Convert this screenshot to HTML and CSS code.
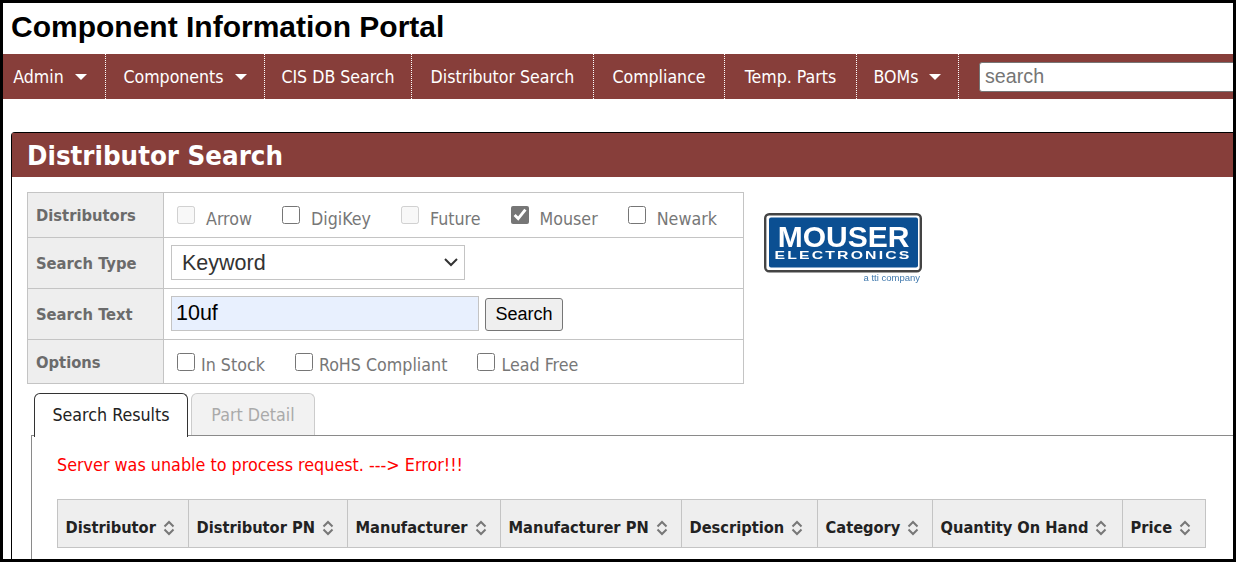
FILE: index.html
```html
<!DOCTYPE html>
<html lang="en">
<head>
<meta charset="utf-8">
<title>Component Information Portal</title>
<link rel="stylesheet" href="styles.css">
</head>
<body>
<svg class="defs" width="0" height="0" aria-hidden="true">
  <symbol id="sort" viewBox="0 0 12 16"><path d="M1.500 6.500 6 2l4.500 4.500M1.500 9.500 6 14l4.500-4.500" fill="none" stroke="#777" stroke-width="2"/></symbol>
</svg>
<div class="frame">
  <h1 class="title">Component Information Portal</h1>
  <nav class="nav">
    <a class="nav-item nav-admin">Admin<i class="caret"></i></a>
    <a class="nav-item nav-comp">Components<i class="caret"></i></a>
    <a class="nav-item nav-cis">CIS DB Search</a>
    <a class="nav-item nav-dist">Distributor Search</a>
    <a class="nav-item nav-comply">Compliance</a>
    <a class="nav-item nav-temp">Temp. Parts</a>
    <a class="nav-item nav-boms">BOMs<i class="caret"></i></a>
    <input class="nav-search" type="text" placeholder="search">
  </nav>
  <section class="panel">
    <h2 class="panel-head">Distributor Search</h2>
    <div class="panel-body">
      <div class="form-row">
        <table class="form">
          <tr class="r1">
            <th>Distributors</th>
            <td>
              <div class="checks dist">
                <label><input type="checkbox" disabled><span>Arrow</span></label>
                <label><input type="checkbox"><span>DigiKey</span></label>
                <label><input type="checkbox" disabled><span>Future</span></label>
                <label><input type="checkbox" checked><span>Mouser</span></label>
                <label><input type="checkbox"><span>Newark</span></label>
              </div>
            </td>
          </tr>
          <tr class="r2">
            <th>Search Type</th>
            <td class="field-cell"><select class="type"><option>Keyword</option></select></td>
          </tr>
          <tr class="r3">
            <th>Search Text</th>
            <td class="field-cell"><div class="search-line"><input class="text" type="text" value="10uf"><button class="btn" type="button">Search</button></div></td>
          </tr>
          <tr class="r4">
            <th>Options</th>
            <td>
              <div class="checks opts">
                <label><input type="checkbox"><span>In Stock</span></label>
                <label><input type="checkbox"><span>RoHS Compliant</span></label>
                <label><input type="checkbox"><span>Lead Free</span></label>
              </div>
            </td>
          </tr>
        </table>
        <svg class="logo" width="162" height="76" viewBox="0 0 162 76" role="img" aria-label="Mouser Electronics">
          <rect x="1.200" y="1.200" width="155.600" height="57" rx="4" fill="#fff" stroke="#444" stroke-width="2.400"/>
          <rect x="5" y="4.500" width="149" height="50" rx="2" fill="#0b4f92"/>
          <text x="79.500" y="33.500" text-anchor="middle" class="logo-main">MOUSER</text>
          <text x="79" y="46" text-anchor="middle" class="logo-sub" textLength="137" lengthAdjust="spacingAndGlyphs">ELECTRONICS</text>
          <text x="156" y="68" text-anchor="end" class="logo-tti">a tti company</text>
        </svg>
      </div>
      <div class="tabs">
        <span class="tab active">Search Results</span>
        <span class="tab off">Part Detail</span>
      </div>
      <div class="tab-body">
        <p class="error">Server was unable to process request. ---&gt; Error!!!</p>
        <table class="results">
          <tr>
            <th class="w1">Distributor<svg class="sort"><use href="#sort"/></svg></th>
            <th class="w2">Distributor PN<svg class="sort"><use href="#sort"/></svg></th>
            <th class="w3">Manufacturer<svg class="sort"><use href="#sort"/></svg></th>
            <th class="w4">Manufacturer PN<svg class="sort"><use href="#sort"/></svg></th>
            <th class="w5">Description<svg class="sort"><use href="#sort"/></svg></th>
            <th class="w6">Category<svg class="sort"><use href="#sort"/></svg></th>
            <th class="w7">Quantity On Hand<svg class="sort"><use href="#sort"/></svg></th>
            <th class="w8">Price<svg class="sort"><use href="#sort"/></svg></th>
          </tr>
        </table>
      </div>
    </div>
  </section>
</div>
</body>
</html>
```
FILE: styles.css
```css
* { box-sizing: border-box; }
html, body { margin: 0; padding: 0; background: #fff; }
.defs { position: absolute; }
.frame {
  width: 1236px;
  height: 562px;
  border: 3px solid #000;
  overflow: hidden;
  font-family: "DejaVu Sans Condensed", "DejaVu Sans", sans-serif;
  background: #fff;
}
.title {
  margin: 0;
  height: 51px;
  padding: 7px 0 0 8px;
  font: bold 30px/33px "Liberation Sans", Arial, sans-serif;
  color: #000;
}
.nav {
  display: flex;
  align-items: stretch;
  width: 1230px;
  height: 45px;
  background: #873e3a;
  color: #fff;
  font-size: 17.600px;
}
.nav-item {
  display: flex;
  align-items: center;
  justify-content: center;
  flex: none;
  padding-top: 1px;
  border-right: 1px dotted #fff;
  white-space: nowrap;
}
.nav-admin { width: 103px; padding-right: 8px; }
.nav-comp { width: 159px; }
.nav-cis { width: 147px; }
.nav-dist { width: 182px; }
.nav-comply { width: 131px; }
.nav-temp { width: 132px; }
.nav-boms { width: 102px; }
.caret {
  width: 0;
  height: 0;
  margin-left: 11px;
  border-left: 6px solid transparent;
  border-right: 6px solid transparent;
  border-top: 6px solid #fff;
}
.nav-search {
  flex: none;
  width: 300px;
  height: 30px;
  margin: 8px 0 0 20px;
  padding: 0 5px 2px;
  border: 1px solid #767676;
  border-radius: 3px;
  background: #fff;
  font: 19.700px "Liberation Sans", Arial, sans-serif;
}
.nav-search::placeholder { color: #757575; }
.panel {
  width: 1260px;
  margin: 33px 0 0 8px;
  border-top: 1px solid #000;
  border-left: 1px solid #000;
  border-radius: 4px 0 0 0;
}
.panel-head {
  margin: 0;
  height: 44px;
  padding: 0 0 0 15px;
  background: #873e3a;
  color: #fff;
  font-size: 27.400px;
  font-weight: 700;
  line-height: 46px;
}
.panel-body { padding: 15px 0 0 15px; }
.form-row { display: flex; align-items: flex-start; }
.form {
  width: 717px;
  flex: none;
  border-collapse: collapse;
  table-layout: fixed;
  color: #777;
  font-size: 17.700px;
}
.form th, .form td { border: 1px solid #c4c4c4; padding: 0; }
.form th {
  width: 136px;
  padding: 1px 0 0 8px;
  background: #eee;
  text-align: left;
  color: #6b6b6b;
  font-size: 16.400px;
  font-weight: 700;
}
.form td { padding-left: 7px; }
.form .field-cell { padding-bottom: 1px; }
.r1 { height: 45px; }
.r2, .r3 { height: 51px; }
.r4 { height: 44px; }
.checks { display: flex; }
.checks label { display: flex; align-items: center; }
.checks input { width: 18px; height: 18px; margin: 0; accent-color: #767676; }
.checks span { position: relative; top: 4px; }
.dist { padding-left: 6px; }
.dist span { margin-left: 11px; }
.dist label { margin-right: 30px; }
.opts { padding-left: 6px; }
.opts span { margin-left: 6px; top: 3px; }
.opts label { margin-right: 30px; }
.type {
  display: block;
  width: 294px;
  height: 35px;
  padding: 0 0 0 10px;
  border: 1px solid #c4c4c4;
  border-radius: 0;
  appearance: none;
  background: #fff url("data:image/svg+xml,%3Csvg xmlns='http://www.w3.org/2000/svg' width='14' height='9'%3E%3Cpath d='M1 1l6 6 6-6' fill='none' stroke='%23333' stroke-width='2'/%3E%3C/svg%3E") no-repeat right 6px center;
  color: #333;
  font: 21.500px "Liberation Sans", Arial, sans-serif;
}
.search-line { display: flex; align-items: center; }
.text {
  width: 308px;
  height: 35px;
  padding: 0 4px;
  border: 1px solid #c4c4c4;
  background: #e8f0fe;
  color: #000;
  font: 21.500px "Liberation Sans", Arial, sans-serif;
}
.btn {
  width: 78px;
  height: 33px;
  margin: 2px 0 0 6px;
  padding: 0;
  border: 1px solid #767676;
  border-radius: 3px;
  background: #efefef;
  color: #000;
  font: 18px "Liberation Sans", Arial, sans-serif;
}
.logo { flex: none; margin: 21px 0 0 20px; filter: blur(0.4px); }
.logo-main { font: bold 30px "Liberation Sans", Arial, sans-serif; fill: #fff; }
.logo-sub { font: bold 11px "Liberation Sans", Arial, sans-serif; letter-spacing: 1.500px; fill: #fff; }
.logo-tti { font: 9.500px "Liberation Sans", Arial, sans-serif; fill: #3f78ad; }
.tabs {
  display: flex;
  align-items: flex-start;
  gap: 3px;
  height: 43px;
  margin: 9px 0 0 7px;
  position: relative;
  z-index: 1;
  font-size: 17.700px;
}
.tab {
  display: flex;
  align-items: center;
  justify-content: center;
  border: 1px solid #ccc;
  border-bottom: 0;
  border-radius: 6px 6px 0 0;
}
.tab.active {
  width: 154px;
  height: 44px;
  padding-bottom: 2px;
  border-color: #333;
  background: #fff;
  color: #222;
}
.tab.off {
  width: 124px;
  height: 42px;
  background: #f2f2f2;
  color: #aaa;
}
.tab-body {
  width: 1300px;
  margin: -1px 0 0 4px;
  height: 200px;
  padding: 17px 0 0 25px;
  border-top: 1px solid #8a8a8a;
  border-left: 1px solid #8a8a8a;
}
.error { margin: 0; height: 46px; color: #f00; font-size: 17.800px; line-height: 24px; }
.results {
  width: 1148px;
  border-collapse: collapse;
  table-layout: fixed;
  font-size: 16.300px;
  color: #222;
}
.results th {
  height: 48px;
  padding: 7px 0 0 7.500px;
  border: 1px solid #c4c4c4;
  background: #eee;
  text-align: left;
  white-space: nowrap;
  font-weight: 700;
}
.w1 { width: 131px; }
.w2 { width: 159px; }
.w3 { width: 153px; }
.w4 { width: 181px; }
.w5 { width: 136px; }
.w6 { width: 115px; }
.w7 { width: 190px; }
.w8 { width: 83px; }
.sort { width: 12px; height: 16px; margin-left: 7px; vertical-align: -3px; }
```
